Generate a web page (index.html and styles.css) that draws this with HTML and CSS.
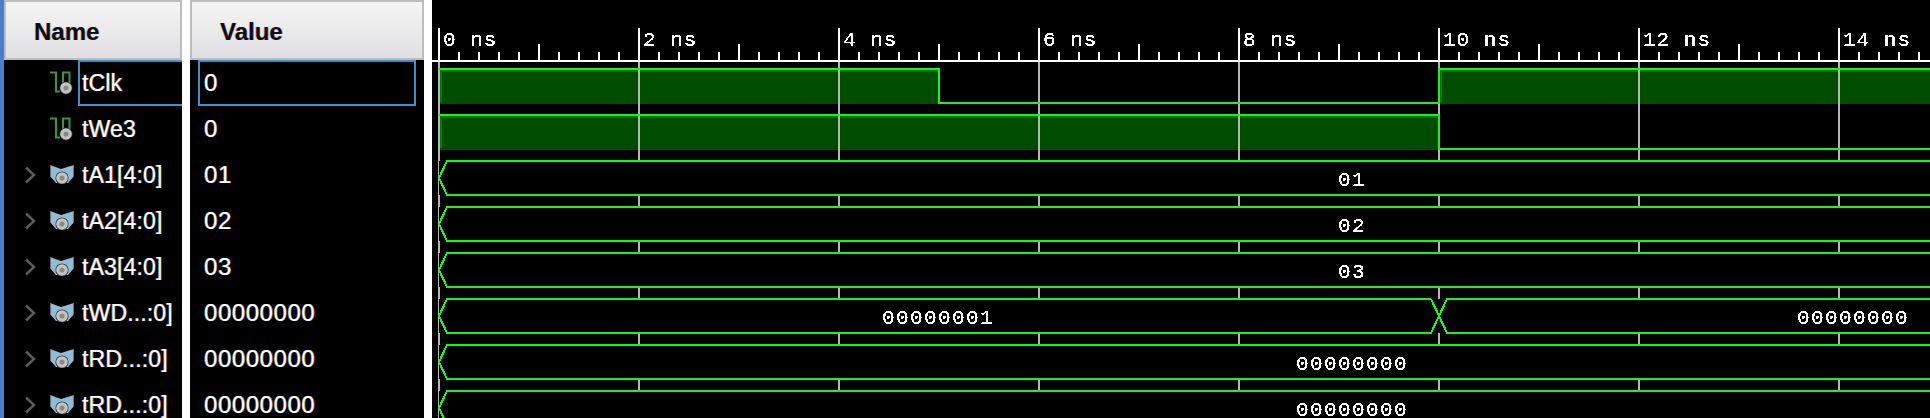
FILE: index.html
```html
<!DOCTYPE html>
<html>
	<head>
		<meta charset="UTF-8">
		<title>Waveform</title>
		<link rel="stylesheet" href="styles.css">
	</head>
	<body>
		<svg class="defs" width="0" height="0">
			<defs>
				<symbol id="bit" viewBox="0 0 24 26">
					<path d="M0 1.5H6V20.5H10M13 13V1.5H19.5V13" fill="none" stroke="#2f9a44" stroke-width="2"/>
					<circle cx="16" cy="17" r="6.5" fill="#2b2b2b"/>
					<circle cx="16" cy="17" r="5.8" fill="#c4c4c4"/>
					<circle cx="16" cy="17" r="2.6" fill="#8a8a8a"/>
				</symbol>
				<symbol id="bus" viewBox="0 0 24 20">
					<path d="M0 1L11 5L24 1V12L18 19H6L0 12Z" fill="#8fbdd8"/>
					<path d="M0.5 1V12M23.5 1V12" stroke="#6f6f6f" stroke-width="1"/>
					<circle cx="12" cy="14" r="6.6" fill="#3a3a3a"/>
					<circle cx="12" cy="14" r="5.8" fill="#c4c4c4"/>
					<circle cx="12" cy="14" r="2.6" fill="#8a8a8a"/>
				</symbol>
				<symbol id="arrow" viewBox="0 0 12 18">
					<path d="M2 1.5L10 9L2 16.5" fill="none" stroke="#5c5c5c" stroke-width="2.4"/>
				</symbol>
			</defs>
		</svg>

		<div class="app">
			<div class="panel names">
				<div class="head">Name</div>
				<div class="row"><span class="slot"></span><svg class="ico bit"><use href="#bit"/></svg><span class="label sel">tClk</span></div>
				<div class="row"><span class="slot"></span><svg class="ico bit"><use href="#bit"/></svg><span class="label">tWe3</span></div>
				<div class="row"><svg class="slot"><use href="#arrow"/></svg><svg class="ico busi"><use href="#bus"/></svg><span class="label">tA1[4:0]</span></div>
				<div class="row"><svg class="slot"><use href="#arrow"/></svg><svg class="ico busi"><use href="#bus"/></svg><span class="label">tA2[4:0]</span></div>
				<div class="row"><svg class="slot"><use href="#arrow"/></svg><svg class="ico busi"><use href="#bus"/></svg><span class="label">tA3[4:0]</span></div>
				<div class="row"><svg class="slot"><use href="#arrow"/></svg><svg class="ico busi"><use href="#bus"/></svg><span class="label">tWD...:0]</span></div>
				<div class="row"><svg class="slot"><use href="#arrow"/></svg><svg class="ico busi"><use href="#bus"/></svg><span class="label">tRD...:0]</span></div>
				<div class="row"><svg class="slot"><use href="#arrow"/></svg><svg class="ico busi"><use href="#bus"/></svg><span class="label">tRD...:0]</span></div>
			</div>

			<div class="panel values">
				<div class="head">Value</div>
				<div class="row"><span class="val sel">0</span></div>
				<div class="row"><span class="val">0</span></div>
				<div class="row"><span class="val">01</span></div>
				<div class="row"><span class="val">02</span></div>
				<div class="row"><span class="val">03</span></div>
				<div class="row"><span class="val">00000000</span></div>
				<div class="row"><span class="val">00000000</span></div>
				<div class="row"><span class="val">00000000</span></div>
			</div>

			<!-- coordinates: 0 ns = x 7, 100 px per ns -->
			<svg class="wave" width="1498" height="418" shape-rendering="crispEdges">
				<defs>
					<pattern id="ticks" x="6" y="0" width="200" height="62" patternUnits="userSpaceOnUse">
						<rect x="0" y="28" width="2" height="32" fill="#fff"/>
						<rect x="100" y="44" width="2" height="16" fill="#fff"/>
						<path d="M21 52v8M41 52v8M61 52v8M81 52v8M121 52v8M141 52v8M161 52v8M181 52v8" stroke="#fff" stroke-width="2"/>
					</pattern>
					<pattern id="grid" x="6" y="0" width="200" height="418" patternUnits="userSpaceOnUse">
						<rect x="0" y="0" width="2" height="418" fill="#b6b6b6"/>
					</pattern>
					<!-- hard edges on the small text -->
					<filter id="hard" x="-5%" y="-20%" width="110%" height="140%" color-interpolation-filters="sRGB">
						<feComponentTransfer>
							<feFuncA type="discrete" tableValues="0 1 1"/>
						</feComponentTransfer>
					</filter>
				</defs>

				<!-- ruler -->
				<rect x="0" y="0" width="1498" height="60" fill="url(#ticks)"/>
				<rect x="0" y="60" width="1498" height="2" fill="#fff"/>
				<text class="tm" x="11" y="46">0 ns</text>
				<text class="tm" x="211" y="46">2 ns</text>
				<text class="tm" x="411" y="46">4 ns</text>
				<text class="tm" x="611" y="46">6 ns</text>
				<text class="tm" x="811" y="46">8 ns</text>
				<text class="tm" x="1011" y="46">10 ns</text>
				<text class="tm" x="1211" y="46">12 ns</text>
				<text class="tm" x="1411" y="46">14 ns</text>

				<!-- bit fills -->
				<path class="hi" d="M7 70H507V104H7ZM1007 70H1498V104H1007ZM7 116H1007V150H7Z"/>
				<path class="edge" d="M8 70H507V72H10V102H8ZM1008 70H1498V72H1010V102H1008ZM8 116H1005V118H10V148H8Z"/>

				<rect x="0" y="62" width="1498" height="356" fill="url(#grid)"/>

				<!-- bus interiors hide the grid -->
				<path class="bus-bg" d="M7 161H1498V195H7ZM7 207H1498V241H7ZM7 253H1498V287H7ZM7 299H1498V333H7ZM7 345H1498V379H7ZM7 391H1498V425H7Z"/>

				<!-- bit lines -->
				<path class="line" d="M7 69H507V103H1007V69H1498"/>
				<path class="line" d="M7 115H1007V149H1498"/>

				<!-- bus lines -->
				<path class="line" d="M1498 161H15L7 178L15 195H1498"/>
				<path class="line" d="M1498 207H15L7 224L15 241H1498"/>
				<path class="line" d="M1498 253H15L7 270L15 287H1498"/>
				<path class="line" d="M999 299H15L7 316L15 333H999L1015 299H1498M999 299L1015 333H1498"/>
				<path class="line" d="M1498 345H15L7 362L15 379H1498"/>
				<path class="line" d="M1498 391H15L7 408L15 425H1498"/>

				<text class="bv" x="920" y="186">01</text>
				<text class="bv" x="920" y="232">02</text>
				<text class="bv" x="920" y="278">03</text>
				<text class="bv" x="506" y="324">00000001</text>
				<text class="bv" x="1421" y="324">00000000</text>
				<text class="bv" x="920" y="370">00000000</text>
				<text class="bv" x="920" y="416">00000000</text>
			</svg>
		</div>
	</body>
</html>
```

FILE: styles.css
```css
*{
	margin: 0;
	padding: 0;
	box-sizing: border-box;
}
html, body{
	height: 418px;
	overflow: hidden;
	background-color: #fff;
}
.defs{
	position: absolute;
}
.app{
	display: flex;
	height: 418px;
	width: 1930px;
	gap: 8px;
	border-left: 4px solid #4a7dcf;
	overflow: hidden;
}
.panel{
	background-color: #000;
	color: #fff;
	font-family: "Liberation Sans", Arial, sans-serif;
	font-size: 23px;
	/* colour fringes of the screen font */
	text-shadow: -0.6px 0 rgba(70, 140, 255, 0.7), 0.6px 0 rgba(255, 150, 40, 0.7);
	overflow: hidden;
	flex: none;
}
.names{
	width: 178px;
}
.values{
	width: 234px;
}
.head{
	height: 60px;
	padding: 3px 0 0 28px;
	display: flex;
	align-items: center;
	color: #0c0c0c;
	font-size: 24px;
	font-weight: bold;
	text-shadow: -0.6px 0 rgba(255, 150, 40, 0.7), 0.6px 0 rgba(40, 110, 255, 0.7);
	border: 2px solid #bdbdbd;
	background: linear-gradient(#f5f5f5, #e0e0e3);
}
.row{
	height: 46px;
	display: flex;
	align-items: center;
}

/* name column */
.names .row{
	padding-left: 20px;
}
.slot{
	width: 12px;
	height: 18px;
	margin-right: 14px;
	flex: none;
}
.ico{
	width: 24px;
	flex: none;
}
.ico.bit{
	height: 26px;
	margin-top: 1px;
}
.ico.busi{
	height: 20px;
	margin-top: -3px;
}
.label{
	flex: 1;
	align-self: stretch;
	margin-left: 4px;
	padding-left: 2px;
	display: flex;
	align-items: center;
	border: 2px solid transparent;
	border-right: 0;
	letter-spacing: 0.15px;
	white-space: nowrap;
	overflow: hidden;
}

/* value column */
.val{
	flex: 1;
	align-self: stretch;
	margin: 0 8px;
	padding-left: 4px;
	display: flex;
	align-items: center;
	border: 2px solid transparent;
	font-size: 24px;
	letter-spacing: 0.55px;
}
.sel{
	border-color: #3f8fcb;
}

/* waveform */
.wave{
	flex: none;
	background-color: #000;
	display: block;
}
.tm, .bv{
	font-family: "Liberation Mono", "DejaVu Sans Mono", monospace;
	font-size: 21px;
	fill: #fff;
	filter: url(#hard);
}
.tm{
	letter-spacing: 1px;
}
.bv{
	text-anchor: middle;
	letter-spacing: 1.4px;
}
.hi{
	fill: #004d00;
}
.edge{
	fill: #007a00;
}
.bus-bg{
	fill: #000;
}
.line{
	fill: none;
	stroke: #16f516;
	stroke-width: 2;
}
```
